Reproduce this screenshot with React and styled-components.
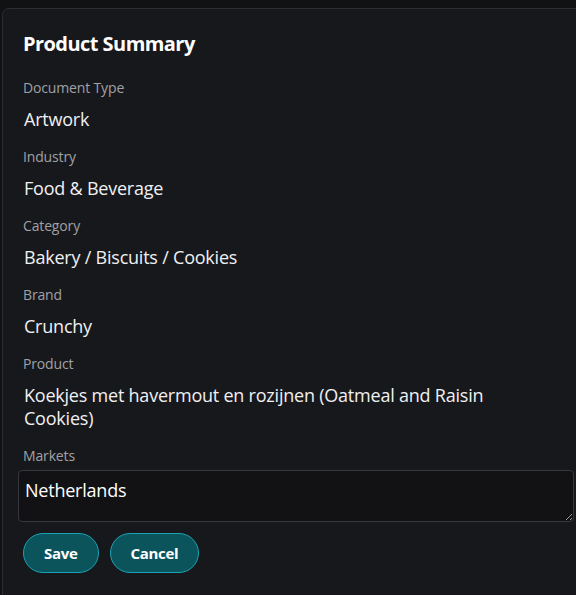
import styled, { createGlobalStyle } from "styled-components"

const fields = [
  { label: "Document Type", value: "Artwork" },
  { label: "Industry", value: "Food & Beverage" },
  { label: "Category", value: "Bakery / Biscuits / Cookies" },
  { label: "Brand", value: "Crunchy" },
  { label: "Product", value: "Koekjes met havermout en rozijnen (Oatmeal and Raisin Cookies)" },
]

export default function App() {
  return (
    <>
      <GlobalStyle />
      <Page>
        <Card>
          <Title>Product Summary</Title>
          {fields.map((f) => (
            <Field key={f.label}>
              <Label>{f.label}</Label>
              <Value>{f.value}</Value>
            </Field>
          ))}
          <Field>
            <Label>Markets</Label>
            <TextArea defaultValue="Netherlands" />
          </Field>
          <Actions>
            <Button>Save</Button>
            <Button>Cancel</Button>
          </Actions>
        </Card>
      </Page>
    </>
  )
}

const GlobalStyle = createGlobalStyle`
  html, body {
    margin: 0;
    background: #111214;
    overflow: hidden;
  }
  body {
    font-family: "Open Sans", "Noto Sans", sans-serif;
  }
`

const Page = styled.div`
  padding: 8px 0 0 2px;
  width: 620px;
  height: 595px;
`

const Card = styled.div`
  width: 556px;
  min-height: 640px;
  background: #17181c;
  border: 1px solid #2c2d33;
  border-radius: 7px;
  padding: 21px 15px;
  display: flex;
  flex-direction: column;
`

const Title = styled.h2`
  margin: 0 5px 20px;
  font-size: 20px;
  line-height: 28px;
  font-weight: 700;
  letter-spacing: -0.55px;
  color: #ffffff;
`

const Field = styled.div`
  display: flex;
  flex-direction: column;
  margin-bottom: 16px;
`

const Label = styled.div`
  padding: 0 5px;
  font-size: 14px;
  line-height: 20px;
  letter-spacing: -0.15px;
  color: #a0a1a5;
  margin-bottom: 10px;
`

const Value = styled.div`
  padding: 0 6px;
  max-width: 500px;
  font-size: 18px;
  line-height: 23px;
  letter-spacing: -0.22px;
  color: #f0f0f2;
`

const TextArea = styled.textarea`
  display: block;
  box-sizing: border-box;
  width: 556px;
  height: 52px;
  margin-top: -6px;
  padding: 8px 6px;
  background: #121214;
  border: 1px solid #36373d;
  border-radius: 4px;
  color: #ffffff;
  font-family: "Open Sans", "Noto Sans", sans-serif;
  font-size: 18px;
  line-height: 23px;
  letter-spacing: -0.22px;
  resize: vertical;
  outline: none;
`

const Actions = styled.div`
  display: flex;
  gap: 11px;
  padding: 0 5px;
  margin-top: -5px;
`

const Button = styled.button`
  height: 40px;
  padding: 0 20px;
  border-radius: 20px;
  border: 1px solid #1aa3b4;
  background: #0c545c;
  color: #ffffff;
  font-family: "Open Sans", "Noto Sans", sans-serif;
  font-size: 15px;
  font-weight: 700;
  letter-spacing: -0.3px;
  cursor: pointer;
`
